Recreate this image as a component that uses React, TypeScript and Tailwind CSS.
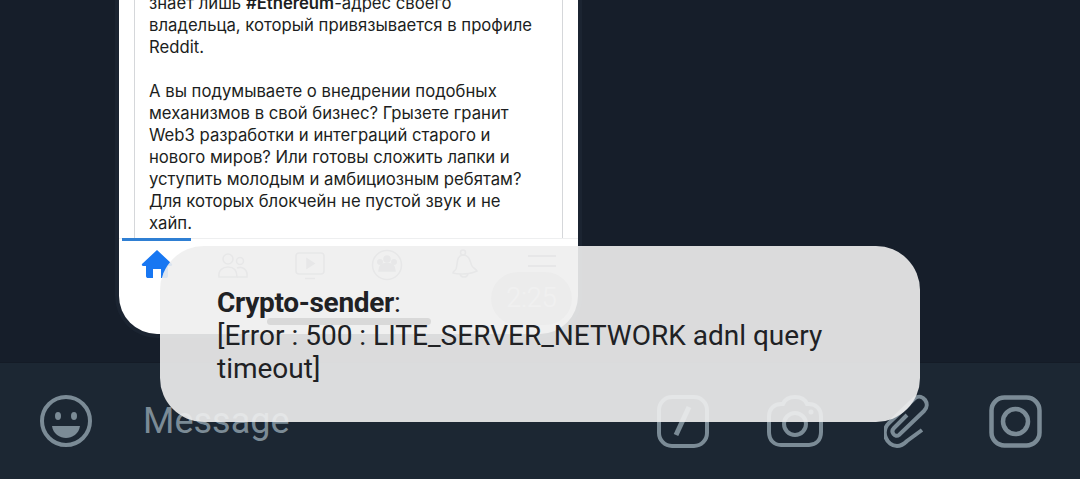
import React from 'react';

const postLines = [
  'знает лишь #Ethereum-адрес своего',
  'владельца, который привязывается в профиле',
  'Reddit.',
  '',
  'А вы подумываете о внедрении подобных',
  'механизмов в свой бизнес? Грызете гранит',
  'Web3 разработки и интеграций старого и',
  'нового миров? Или готовы сложить лапки и',
  'уступить молодым и амбициозным ребятам?',
  'Для которых блокчейн не пустой звук и не',
  'хайп.',
];

const NavIcons = () => (
  <div className="flex h-[56px] items-start pt-[10px]">
    <svg width="32" height="30" viewBox="0 0 32 30" className="ml-[22px]">
      <path d="M16 1 L31 15 C31.500 16 31 17 30 17 L27 17 L27 27 C27 28.500 26 29 25 29 L20 29 L20 20 L12 20 L12 29 L7 29 C6 29 5 28.500 5 27 L5 17 L2 17 C1 17 0.500 16 1 15 Z" fill="#1877f2" />
    </svg>
    <svg width="32" height="28" viewBox="0 0 32 28" fill="none" stroke="#9a9ea4" strokeWidth="1.6" className="ml-[44px] mt-[3px]">
      <circle cx="11" cy="7" r="5" />
      <circle cx="23" cy="9" r="3.500" />
      <path d="M2 25 C1 18 6 15 11 15 C16 15 20 18 20 25 Z" />
      <path d="M20 16 C25 14 31 17 30 25 L20 25" />
    </svg>
    <svg width="30" height="28" viewBox="0 0 30 28" fill="none" stroke="#9a9ea4" strokeWidth="1.6" className="ml-[46px] mt-[3px]">
      <rect x="1" y="1" width="28" height="21" rx="3" />
      <path d="M12 7 L19 11.500 L12 16 Z" fill="#9a9ea4" />
      <path d="M10 26.500 L20 26.500" />
    </svg>
    <svg width="32" height="32" viewBox="0 0 32 32" fill="none" stroke="#9a9ea4" strokeWidth="1.600" className="ml-[46px]">
      <circle cx="16" cy="16" r="14.500" />
      <circle cx="16" cy="10" r="3" fill="#9a9ea4" />
      <circle cx="9" cy="13" r="2.200" fill="#9a9ea4" />
      <circle cx="23" cy="13" r="2.200" fill="#9a9ea4" />
      <path d="M8 22 C8 16 12 14.500 16 14.500 C20 14.500 24 16 24 22 Z" fill="#9a9ea4" />
    </svg>
    <svg width="28" height="30" viewBox="0 0 28 30" fill="none" stroke="#9a9ea4" strokeWidth="1.600" className="ml-[48px]">
      <circle cx="12" cy="3.500" r="2.500" />
      <path d="M5 20 C7 14 5 7 12 6 C19 6 19 13 21 17 C22 19 25 20 26 22 C20 25 8 26 2 24 C2 22 4 22 5 20 Z" />
      <path d="M9 25 C10 29 16 29 17 25" />
    </svg>
    <div className="ml-[49px] mt-[6px] flex w-[28px] flex-col gap-[8px]">
      <div className="h-[2px] bg-[#9a9ea4]" />
      <div className="h-[2px] bg-[#9a9ea4]" />
      <div className="h-[2px] bg-[#9a9ea4]" />
    </div>
  </div>
);

const PhoneShot = () => (
  <div className="relative h-[338px] w-[467px] overflow-hidden rounded-b-[42px] border-x-[4px] border-b-[4px] border-[#1b2431] bg-white -ml-[4px]">
    <div className="mx-[15px] h-[238px] overflow-hidden border-x border-[#d5d7da] pl-[14px]">
      <div className="-mt-[8px] font-['Inter',sans-serif] text-[16.7px] leading-[22px] text-[#1c1e21]">
        {postLines.map((line, i) => (
          <div key={i} className="h-[22px] whitespace-nowrap">
            {line.includes('#Ethereum') ? (
              <>
                знает лишь <span className="font-semibold">#Ethereum</span>-адрес своего
              </>
            ) : (
              line
            )}
          </div>
        ))}
      </div>
    </div>
    <div className="relative border-t border-[#eeeff0]">
      <div className="absolute -top-px left-[3px] h-[3px] w-[69px] bg-[#2f7fd3]" />
      <NavIcons />
    </div>
    {/* video time pill + home indicator, both sit under the toast */}
    <div className="absolute left-[372px] top-[272px] flex h-[53px] w-[81px] items-center justify-center rounded-full bg-[#d2d2d2] font-['Roboto',sans-serif] text-[27px] font-light text-white">
      2:25
    </div>
    <div className="absolute left-[148px] top-[318px] h-[7px] w-[164px] rounded-full bg-black" />
  </div>
);

const InputBar = () => (
  <div className="flex h-[117px] items-center border-t border-[#141b26] bg-[#1c2733]">
    <svg width="54" height="54" viewBox="0 0 54 54" fill="none" className="ml-[39px]">
      <circle cx="27" cy="27" r="24" stroke="#7b8b96" strokeWidth="4" />
      <ellipse cx="19" cy="22" rx="3" ry="4" fill="#7b8b96" />
      <ellipse cx="35" cy="22" rx="3" ry="4" fill="#7b8b96" />
      <path d="M13 32 H41 C40 40 33 44 27 44 C21 44 14 40 13 32 Z" fill="#7b8b96" />
    </svg>
    <div className="ml-[50px] w-[514px] font-['Roboto',sans-serif] text-[36px] leading-none text-[#7b8b96]">Message</div>
    <svg width="52" height="53" viewBox="0 0 52 53" fill="none" stroke="#7b8b96" strokeWidth="4">
      <rect x="2" y="2" width="48" height="49" rx="13" />
      <path d="M32 12 L19 40" strokeWidth="5" />
    </svg>
    <svg width="56" height="53" viewBox="0 0 56 53" fill="none" stroke="#7b8b96" strokeWidth="4" className="ml-[58px]">
      <path d="M14 9 L16 9 C18 4 22 2 28 2 C34 2 38 4 40 9 L42 9 C49 9 54 14 54 21 L54 37 C54 45 49 50 42 50 L14 50 C7 50 2 45 2 37 L2 21 C2 14 7 9 14 9 Z" />
      <circle cx="28" cy="29" r="11" />
      <circle cx="44" cy="17" r="2.500" fill="#7b8b96" stroke="none" />
    </svg>
    <svg width="46" height="54" viewBox="885 394 46 54" fill="none" stroke="#7b8b96" strokeWidth="4" className="ml-[61px]">
      <path d="M908 415 L895 428 C891 432 896 438 900 435 L925 411 C932 404 924 393 916 398 L890 423 C881 432 888 446 898 446 C902 446 905 444 908 441 L923 430" />
    </svg>
    <svg width="53" height="53" viewBox="0 0 53 53" fill="none" stroke="#7b8b96" strokeWidth="4.500" className="ml-[59px]">
      <rect x="2.500" y="2.500" width="48" height="48" rx="13" />
      <circle cx="26.500" cy="26.500" r="12.500" />
    </svg>
  </div>
);

export default function App() {
  return (
    <div className="relative h-[479px] w-[1080px] overflow-hidden bg-[#161e2a]">
      <div className="h-[362px] pl-[119px]">
        <PhoneShot />
      </div>
      <InputBar />
      {/* toast */}
      <div className="absolute left-[160px] top-[246px] h-[176px] w-[760px] rounded-[44px] bg-[#eeeeef]/[0.91] pl-[57px] pt-[40px] font-['Roboto',sans-serif] text-[28px] leading-[33px] text-[#202124]">
        <div>
          <span className="font-bold tracking-[-0.3px]">Crypto-sender</span>:
        </div>
        <div className="w-[640px]">[Error : 500 : LITE_SERVER_NETWORK adnl query timeout]</div>
      </div>
    </div>
  );
}
